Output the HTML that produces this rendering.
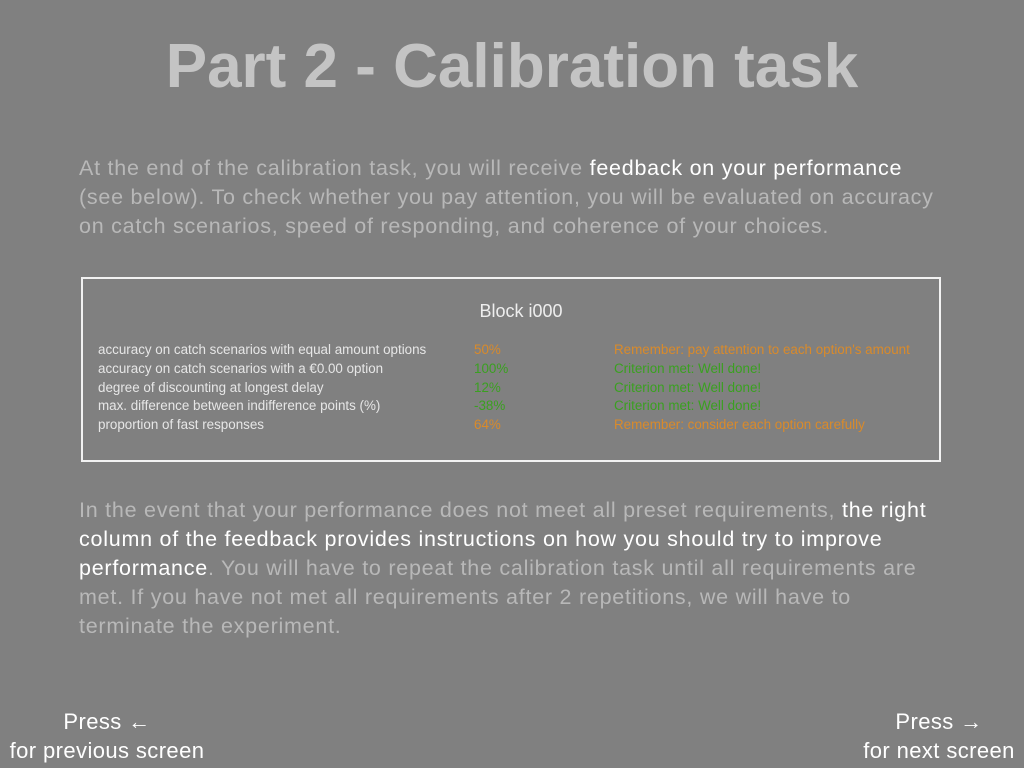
<!DOCTYPE html>
<html><head><meta charset="utf-8"><style>
body{margin:0;width:1024px;height:768px;background:#808080;font-family:"Liberation Sans",sans-serif;position:relative;overflow:hidden}
.t{position:absolute;left:0;width:1024px;top:31px;text-align:center;font-size:62px;font-weight:bold;color:#c4c4c4}
.p{position:absolute;left:79px;width:870px;font-size:21.5px;letter-spacing:0.75px;line-height:29px;color:#b8b8b8}
.w{color:#fff}
.box{position:absolute;left:81px;top:277px;width:856px;height:181px;border:2px solid #f2f2f2}
.bt{position:absolute;left:0;width:100%;top:22px;text-align:center;font-size:18px;color:#eee;padding-left:20px;box-sizing:border-box}
.r{position:absolute;font-size:13.4px;color:#e6e6e6;white-space:nowrap}
.o{color:#d98a2a}.g{color:#3aa020}
.nav{position:absolute;font-size:22px;letter-spacing:0.4px;line-height:29px;color:#fff;text-align:center;white-space:nowrap}
</style></head><body>
<div class="t">Part 2 - Calibration task</div>
<div class="p" style="top:154px">At the end of the calibration task, you will receive <span class="w">feedback on your performance</span> (see below). To check whether you pay attention, you will be evaluated on accuracy on catch scenarios, speed of responding, and coherence of your choices.</div>
<div class="box">
<div class="bt">Block i000</div>
<div class="r" style="left:15px;top:62px;line-height:18.8px">accuracy on catch scenarios with equal amount options<br>accuracy on catch scenarios with a €0.00 option<br>degree of discounting at longest delay<br>max. difference between indifference points (%)<br>proportion of fast responses</div>
<div class="r" style="left:391px;top:62px;line-height:18.8px"><span class="o">50%</span><br><span class="g">100%</span><br><span class="g">12%</span><br><span class="g">-38%</span><br><span class="o">64%</span></div>
<div class="r" style="left:531px;top:62px;line-height:18.8px"><span class="o">Remember: pay attention to each option's amount</span><br><span class="g">Criterion met: Well done!</span><br><span class="g">Criterion met: Well done!</span><br><span class="g">Criterion met: Well done!</span><br><span class="o">Remember: consider each option carefully</span></div>
</div>
<div class="p" style="top:496px">In the event that your performance does not meet all preset requirements, <span class="w">the right column of the feedback provides instructions on how you should try to improve performance</span>. You will have to repeat the calibration task until all requirements are met. If you have not met all requirements after 2 repetitions, we will have to terminate the experiment.</div>
<div class="nav" style="left:0px;width:214px;top:707px">Press ←<br>for previous screen</div>
<div class="nav" style="left:852px;width:174px;top:707px">Press →<br>for next screen</div>
</body></html>
